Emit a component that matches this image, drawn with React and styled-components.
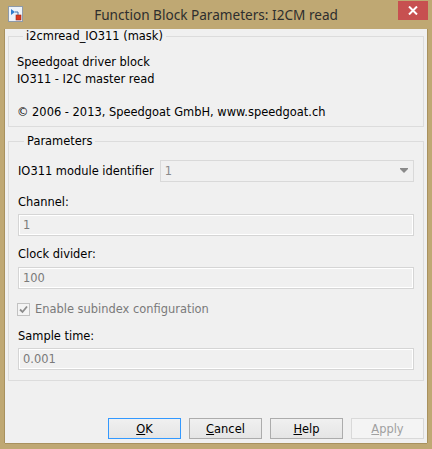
import React from 'react'
import styled, { createGlobalStyle } from 'styled-components'

const GlobalStyle = createGlobalStyle`
  html, body {
    margin: 0;
    padding: 0;
    background: #bfa873;
  }
  * {
    box-sizing: border-box;
  }
`

const Window = styled.div`
  width: 432px;
  height: 449px;
  background: #bfa873;
  display: flex;
  flex-direction: column;
  padding: 0 5px 6px 5px;
  font-family: 'DejaVu Sans', 'Liberation Sans', sans-serif;
  font-size: 11.45px;
  color: #000;
`

const TitleBar = styled.div`
  height: 29px;
  display: grid;
  grid-template-columns: 1fr auto 1fr;
  align-items: start;
  margin: 0 -5px;
`

const AppIcon = styled.svg`
  margin: 6px 0 0 8px;
  display: block;
`

const Title = styled.div`
  font-family: 'Noto Sans', 'Open Sans', sans-serif;
  font-size: 13.6px;
  line-height: 29px;
  color: #2e2e2e;
  white-space: nowrap;
`

const CloseButton = styled.div`
  justify-self: end;
  margin: 1px 4px 0 0;
  width: 30px;
  height: 19px;
  background: #c75050;
  display: flex;
  align-items: center;
  justify-content: center;
`

const Client = styled.div`
  flex: 1;
  background: #f0f0f0;
  display: flex;
  flex-direction: column;
  padding: 0 3px 4px 3px;
  box-shadow: -1px 0 0 #a8915e, 0 1px 0 #a8915e, 1px 0 0 #a8915e;
`

const Group = styled.fieldset`
  margin: ${({ $gap }) => $gap}px 0 0 0;
  border: 1px solid #dcdcdc;
  padding: ${({ $pad }) => $pad};
  min-width: 0;
`

const Legend = styled.legend`
  margin-left: 6px;
  padding: 0 3px;
  line-height: 14px;
`

const Line = styled.div`
  line-height: 16.5px;
  height: 16.5px;
  white-space: nowrap;
`

const ComboRow = styled.div`
  display: flex;
  align-items: center;
  gap: 6px;
  margin-top: 12px;
`

const Combo = styled.div`
  flex: 1;
  height: 22px;
  border: 1px solid #d9d9d9;
  background: #f0f0f0;
  color: #8a8a8a;
  display: flex;
  align-items: center;
  justify-content: space-between;
  padding: 0 5px 0 4px;
`

const Label = styled.div`
  line-height: 16px;
  margin-top: ${({ $top }) => $top}px;
  white-space: nowrap;
`

const Field = styled.div`
  height: 22px;
  margin-top: ${({ $top }) => $top}px;
  border: 1px solid #d5d5d5;
  box-shadow: inset 0 0 0 1px #fff;
  background: #f0f0f0;
  color: #7a7a7a;
  display: flex;
  align-items: center;
  padding-left: 4px;
`

const CheckRow = styled.div`
  display: flex;
  align-items: center;
  gap: 5px;
  margin-top: 12px;
  height: 16px;
  color: #7a7a7a;
  margin-left: -1px;
`

const CheckBox = styled.div`
  width: 13px;
  height: 13px;
  border: 1px solid #c2c2c2;
  background: #f4f4f4;
  display: flex;
  align-items: center;
  justify-content: center;
`

const ButtonBar = styled.div`
  margin-top: auto;
  display: flex;
  justify-content: flex-end;
  gap: 8px;
`

const Button = styled.div`
  width: 73px;
  height: 21px;
  border: 1px solid ${({ $default, $disabled }) =>
    $default ? '#3399ff' : $disabled ? '#d9d9d9' : '#acacac'};
  background: ${({ $disabled }) =>
    $disabled ? '#f4f4f4' : 'linear-gradient(#f0f0f0, #e5e5e5)'};
  color: ${({ $disabled }) => ($disabled ? '#a0a0a0' : '#000')};
  display: flex;
  align-items: center;
  justify-content: center;

  > span > u {
    text-decoration: underline;
  }
`

const Arrow = () => (
  <svg width="8" height="6" viewBox="0 0 8 6">
    <rect x="0" y="0" width="8" height="1" fill="#8a8a8a" />
    <path d="M0 1 L8 1 L4 5 Z" fill="#8a8a8a" />
  </svg>
)

const Check = () => (
  <svg width="9" height="9" viewBox="0 0 9 9">
    <path d="M1 4.5 L3.5 7 L8 1.5" fill="none" stroke="#8c8c8c" strokeWidth="1.8" />
  </svg>
)

const App = () => {
  return (
    <>
      <GlobalStyle />
      <Window>
        <TitleBar>
          <AppIcon width="15" height="16" viewBox="0 0 15 16">
            <rect x="0.5" y="0.5" width="14" height="15" fill="#eef3fa" stroke="#8e9aa8" />
            <path d="M3 3 L3 9 L7 6 Z" fill="#2f7fd0" />
            <path d="M7 6 L10 6 L10 9" fill="none" stroke="#3a6ea8" strokeWidth="1" />
            <rect x="8" y="9" width="5" height="5" fill="#d9381e" stroke="#9c2a18" strokeWidth="0.6" />
          </AppIcon>
          <Title>Function Block Parameters: I2CM read</Title>
          <CloseButton>
            <svg width="10" height="9" viewBox="0 0 10 9">
              <path d="M1 0.5 L9 8.5 M9 0.5 L1 8.5" stroke="#fff" strokeWidth="2" />
            </svg>
          </CloseButton>
        </TitleBar>
        <Client>
          <Group $gap={0} $pad="11px 8px 6px 8px">
            <Legend>i2cmread_IO311 (mask)</Legend>
            <Line>Speedgoat driver block</Line>
            <Line>IO311 - I2C master read</Line>
            <Line />
            <Line>© 2006 - 2013, Speedgoat GmbH, www.speedgoat.ch</Line>
          </Group>
          <Group $gap={7} $pad="0 9px 10px 9px">
            <Legend>Parameters</Legend>
            <ComboRow>
              <span>IO311 module identifier</span>
              <Combo>
                <span>1</span>
                <Arrow />
              </Combo>
            </ComboRow>
            <Label $top={12}>Channel:</Label>
            <Field $top={4}>1</Field>
            <Label $top={10}>Clock divider:</Label>
            <Field $top={5}>100</Field>
            <CheckRow>
              <CheckBox>
                <Check />
              </CheckBox>
              <span>Enable subindex configuration</span>
            </CheckRow>
            <Label $top={11}>Sample time:</Label>
            <Field $top={4}>0.001</Field>
          </Group>
          <ButtonBar>
            <Button $default>
              <span><u>O</u>K</span>
            </Button>
            <Button>
              <span><u>C</u>ancel</span>
            </Button>
            <Button>
              <span><u>H</u>elp</span>
            </Button>
            <Button $disabled>
              <span><u>A</u>pply</span>
            </Button>
          </ButtonBar>
        </Client>
      </Window>
    </>
  )
}

export default App
